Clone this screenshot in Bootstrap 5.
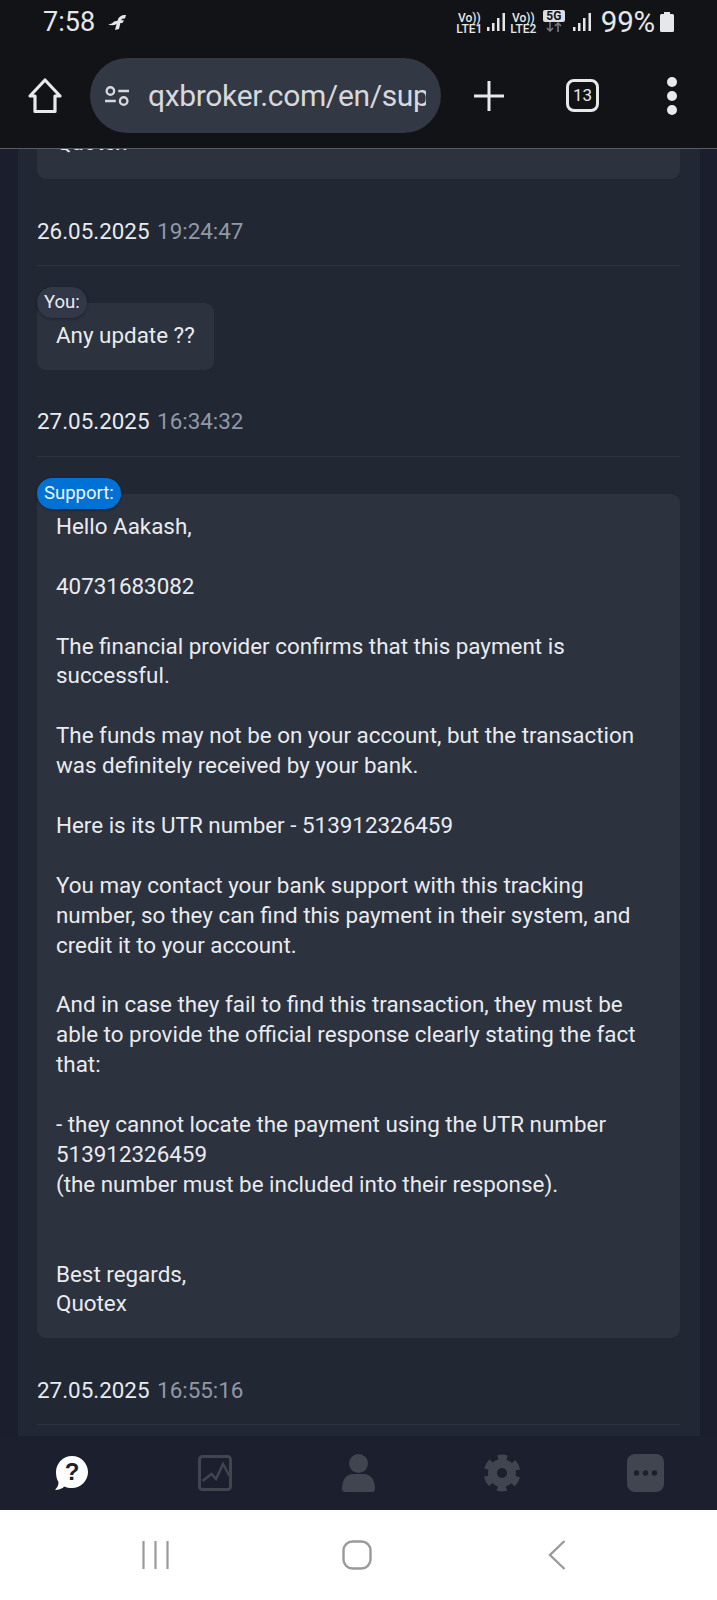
<!DOCTYPE html>
<html lang="en">
<head>
  <meta charset="UTF-8">
  <title>Support</title>
  <link href="https://cdn.jsdelivr.net/npm/bootstrap@5.3.0/dist/css/bootstrap.min.css" rel="stylesheet">
  <style>
    html, body { height: 1600px; overflow: hidden; }
    body {
      background: #1b1f2d;
      font-family: Roboto, "Liberation Sans", sans-serif;
      color: #e9ebef;
      width: 717px;
    }
    .phone-top {
      height: 149px;
      background: #111317;
      border-bottom: 1px solid #5a5d63;
      flex: none;
    }
    .status-row { height: 58px; padding: 7px 43px 0 43px; color: #e6e7e9; }
    .clock { font-size: 27px; line-height: 30px; width: 67px; }
    .net-label { font-size: 12px; line-height: 10.500px; font-weight: 500; text-align: center; width: 27px; }
    .battery-txt { font-size: 29.500px; line-height: 30px; margin-left: 9px; margin-right: 5px; letter-spacing: -.2px; }
    .five-g { font-size: 12px; line-height: 12px; font-weight: 700; background: #dcdde0; color: #111317; border-radius: 2px; width: 22px; text-align: center; }
    .tool-row { height: 75px; padding-left: 28px; }
    .url-pill {
      width: 351px;
      height: 75px;
      margin-left: 28px;
      margin-right: 33px;
      background: #333845;
      border-radius: 38px;
      padding: 0 15px 0 15px;
      overflow: hidden;
    }
    .url-txt { font-size: 30px; letter-spacing: -.35px; color: #d6d8dc; margin-left: 19px; white-space: nowrap; overflow: hidden; }
    .tab-count {
      width: 33px; height: 33px; margin-left: 62px; margin-right: 68px;
      border: 3px solid #e8e9eb; border-radius: 8px;
      font-size: 17px; line-height: 27px; text-align: center; color: #e8e9eb;
    }
    .dot-col { gap: 4px; }
    .dot-col span { width: 10px; height: 10px; border-radius: 50%; background: #e8e9eb; }
    .chat-clip { height: 1287px; overflow: hidden; flex: none; }
    .chat-panel { margin: 0 17px 0 18px; height: 1287px; background: #212733; padding: 0 20px 0 19px; overflow: hidden; }
    .msg-box {
      position: relative;
      background: #2c323e;
      border-radius: 9px;
      padding: 18px 19px 19px;
      font-size: 22.400px;
      line-height: 29.900px;
      white-space: pre-line;
      color: #e9ebef;
    }
    .msg-first { margin-top: -39px; height: 69px; }
    .msg-short { width: 177px; }
    .who-tag {
      position: absolute;
      left: 0;
      top: -16px;
      height: 31px;
      padding: 0 7px;
      border-radius: 16px;
      font-size: 18.500px;
      line-height: 31px;
      white-space: nowrap;
      box-shadow: 0 1px 3px rgba(0, 0, 0, .35);
    }
    .who-you { background: #333848; color: #e9ebef; }
    .who-support { background: #0072d6; color: #eef6fd; }
    .stamp {
      margin-top: 36.500px;
      padding-bottom: 19.500px;
      margin-bottom: 37px;
      border-bottom: 1px solid #2d333f;
      font-size: 22.400px;
      line-height: 30px;
    }
    .stamp span { color: #9298a5; margin-left: 2px; }
    .bottom-nav { height: 74px; background: #1b1f2e; flex: none; }
    .nav-cell { flex: 1 1 0; }
    .sys-bar { height: 90px; background: #fff; flex: none; padding: 0 151px 0 142px; }
    .sys-home { margin-left: -3px; }
  </style>
</head>
<body class="d-flex flex-column">

<header class="phone-top">
  <div class="status-row d-flex align-items-start">
    <div class="clock">7:58</div>
    <svg width="18" height="15" viewBox="0 0 18 15" style="margin-top:8px;margin-left:-2px"><path d="M7 15 L8.500 9 C6 10.500 3 10.500 0 9.500 C3 9 5 8 6 6.500 L9.500 5.800 C10.500 2 13 0 18 0 L17 3.600 C14.500 3.200 13.600 4 13.200 5.200 L16 5.200 L14.500 8 L12.400 8 L11 14 Z" fill="#e6e7e9"/></svg>
    <div class="ms-auto d-flex align-items-start">
      <div class="net-label" style="margin-top:6px">Vo))<br>LTE1</div>
      <svg width="19" height="20" viewBox="0 0 19 20" class="ms-1" style="margin-top:5px"><g fill="#e6e7e9"><rect x="0" y="15" width="2.500" height="4"/><rect x="5" y="11" width="2.500" height="8"/><rect x="10" y="6" width="2.500" height="13"/><rect x="15.500" y="1" width="2.500" height="18"/></g></svg>
      <div class="net-label ms-1" style="margin-top:6px">Vo))<br>LTE2</div>
      <div class="d-flex flex-column align-items-center" style="margin-top:3px;margin-left:6px">
        <div class="five-g">5G</div>
        <svg width="18" height="10" viewBox="0 0 18 10"><path d="M5 0V9M2 6l3 3 3-3M13 10V1M10 4l3-3 3 3" fill="none" stroke="#77797d" stroke-width="1.600"/></svg>
      </div>
      <svg width="19" height="20" viewBox="0 0 19 20" class="ms-2" style="margin-top:5px"><g fill="#e6e7e9"><rect x="0" y="15" width="2.500" height="4"/><rect x="5" y="11" width="2.500" height="8"/><rect x="10" y="6" width="2.500" height="13"/><rect x="15.500" y="1" width="2.500" height="18"/></g></svg>
      <div class="battery-txt">99%</div>
      <svg width="14" height="20" viewBox="0 0 14 20" style="margin-top:5px"><path d="M4 0H10V2H12.500A1.500 1.500 0 0 1 14 3.500V18.500A1.500 1.500 0 0 1 12.500 20H1.500A1.500 1.500 0 0 1 0 18.500V3.500A1.500 1.500 0 0 1 1.500 2H4Z" fill="#e6e7e9"/></svg>
    </div>
  </div>
  <div class="tool-row d-flex align-items-center">
    <svg width="34" height="36" viewBox="0 0 34 36"><path d="M17 2 L32 18 H27 V33.500 H7 V18 H2 Z" fill="none" stroke="#e8e9eb" stroke-width="3.200" stroke-linejoin="round"/></svg>
    <div class="url-pill d-flex align-items-center">
      <svg width="29" height="24" viewBox="0 0 29 24"><g fill="none" stroke="#d6d8dc" stroke-width="2.800"><circle cx="6.500" cy="6" r="4.500"/><circle cx="22.500" cy="18" r="4.500"/><path d="M16 6H29M0 18H13"/></g></svg>
      <div class="url-txt">qxbroker.com/en/support</div>
    </div>
    <svg width="30" height="30" viewBox="0 0 30 30"><path d="M15 0V30M0 15H30" stroke="#e8e9eb" stroke-width="3"/></svg>
    <div class="tab-count">13</div>
    <div class="dot-col d-flex flex-column"><span></span><span></span><span></span></div>
  </div>
</header>

<main class="chat-clip">
  <div class="chat-panel">
    <div class="msg-box msg-first">Quotex</div>

    <div class="stamp">26.05.2025 <span>19:24:47</span></div>

    <div class="msg-box msg-short"><div class="who-tag who-you">You:</div>Any update ??</div>

    <div class="stamp">27.05.2025 <span>16:34:32</span></div>

    <div class="msg-box"><div class="who-tag who-support">Support:</div>Hello Aakash,

40731683082

The financial provider confirms that this payment is successful.

The funds may not be on your account, but the transaction was definitely received by your bank.

Here is its UTR number - 513912326459

You may contact your bank support with this tracking number, so they can find this payment in their system, and credit it to your account.

And in case they fail to find this transaction, they must be able to provide the official response clearly stating the fact that:

- they cannot locate the payment using the UTR number 513912326459
(the number must be included into their response).


Best regards,
Quotex</div>

    <div class="stamp">27.05.2025 <span>16:55:16</span></div>
  </div>
</main>

<nav class="bottom-nav d-flex align-items-center">
  <div class="nav-cell text-center"><svg width="34" height="36" viewBox="0 0 34 36"><path d="M17 1C26 1 33 8.500 33 17S26 33 17 33C14 33 11.500 32.500 9.500 31.500C7 33.500 4 35 0 35C2.500 32.500 3.500 30 3.500 27C1.500 24 1 20.500 1 17C1 8.500 8 1 17 1Z" fill="#fff"/><text x="17" y="25" text-anchor="middle" font-family="Liberation Sans, sans-serif" font-weight="700" font-size="24" fill="#1b1f2e">?</text></svg></div>
  <div class="nav-cell text-center"><svg width="34" height="36" viewBox="0 0 34 36"><rect x="1.500" y="1.500" width="31" height="33" rx="3" fill="none" stroke="#41454f" stroke-width="3"/><path d="M4.500 26 L13.500 19 L18 24 L25 9 L31.500 21" fill="none" stroke="#41454f" stroke-width="2.500"/></svg></div>
  <div class="nav-cell text-center"><svg width="33" height="38" viewBox="0 0 33 38"><circle cx="16.500" cy="9.500" r="9.500" fill="#41454f"/><path d="M0 35C0 25 5 20 11 20H22C28 20 33 25 33 35C33 37 32 38 30 38H3C1 38 0 37 0 35Z" fill="#41454f"/></svg></div>
  <div class="nav-cell text-center"><svg width="38" height="38" viewBox="0 0 38 38"><circle cx="19" cy="19" r="14" fill="#41454f"/><circle cx="19" cy="19" r="15.500" fill="none" stroke="#41454f" stroke-width="6" stroke-dasharray="9 7.230" stroke-dashoffset="-3.600"/><circle cx="19" cy="19" r="5" fill="#1b1f2e"/></svg></div>
  <div class="nav-cell text-center"><svg width="37" height="38" viewBox="0 0 37 38"><rect width="37" height="38" rx="8" fill="#41454f"/><circle cx="9.500" cy="19" r="2.700" fill="#1b1f2e"/><circle cx="18.500" cy="19" r="2.700" fill="#1b1f2e"/><circle cx="27.500" cy="19" r="2.700" fill="#1b1f2e"/></svg></div>
</nav>

<footer class="sys-bar d-flex align-items-center justify-content-between">
  <svg width="27" height="30" viewBox="0 0 27 30"><path d="M1.500 1V29M13.500 1V29M25.500 1V29" stroke="#9a9a9a" stroke-width="2.200"/></svg>
  <svg class="sys-home" width="30" height="30" viewBox="0 0 30 30"><rect x="1.500" y="1.500" width="27" height="27" rx="9" fill="none" stroke="#9a9a9a" stroke-width="2.400"/></svg>
  <svg width="18" height="30" viewBox="0 0 18 30"><path d="M16.500 1L2 15L16.500 29" fill="none" stroke="#9a9a9a" stroke-width="2.400"/></svg>
</footer>

<script src="https://cdn.jsdelivr.net/npm/bootstrap@5.3.0/dist/js/bootstrap.bundle.min.js"></script>
</body>
</html>
